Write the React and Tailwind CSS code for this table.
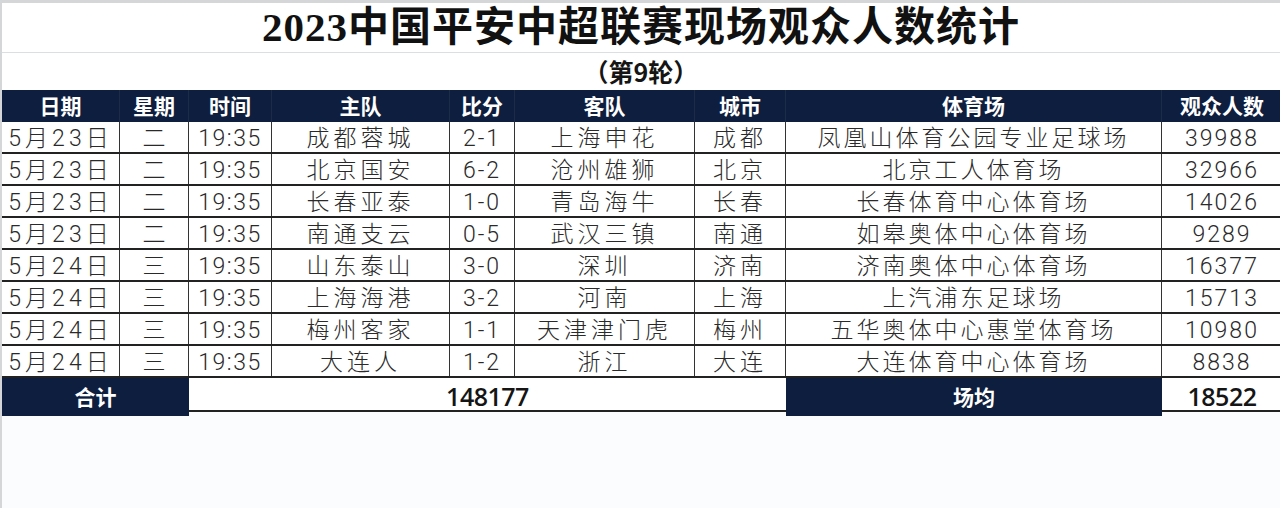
import React from 'react';

const cols = 'grid grid-cols-[118px_69px_83px_178px_65px_180px_91px_376px_120px]';

const headers = ['日期', '星期', '时间', '主队', '比分', '客队', '城市', '体育场', '观众人数'];

const rows = [
  ['5月23日', '二', '19:35', '成都蓉城', '2-1', '上海申花', '成都', '凤凰山体育公园专业足球场', '39988'],
  ['5月23日', '二', '19:35', '北京国安', '6-2', '沧州雄狮', '北京', '北京工人体育场', '32966'],
  ['5月23日', '二', '19:35', '长春亚泰', '1-0', '青岛海牛', '长春', '长春体育中心体育场', '14026'],
  ['5月23日', '二', '19:35', '南通支云', '0-5', '武汉三镇', '南通', '如皋奥体中心体育场', '9289'],
  ['5月24日', '三', '19:35', '山东泰山', '3-0', '深圳', '济南', '济南奥体中心体育场', '16377'],
  ['5月24日', '三', '19:35', '上海海港', '3-2', '河南', '上海', '上汽浦东足球场', '15713'],
  ['5月24日', '三', '19:35', '梅州客家', '1-1', '天津津门虎', '梅州', '五华奥体中心惠堂体育场', '10980'],
  ['5月24日', '三', '19:35', '大连人', '1-2', '浙江', '大连', '大连体育中心体育场', '8838'],
];

const body = "font-['Roboto','Noto_Sans_CJK_SC',sans-serif]";
const cjk = "font-['Noto_Sans_CJK_SC',sans-serif]";

// letter spacing per column, the sheet spreads the text out
const track = [
  'tracking-[4px]',
  '',
  'tracking-[1.5px]',
  'tracking-[4px]',
  'tracking-[2px]',
  'tracking-[4px]',
  'tracking-[4px]',
  'tracking-[3px]',
  'tracking-[2px]',
];

const App = () => {
  return (
    <div className="w-[1280px] h-[508px] bg-[#fbfcfd] overflow-hidden border-t-[3px] border-l-2 border-[#d4d6d8]">
      {/* title */}
      <div className="h-[50px] flex items-center justify-center border-b border-[#dcdfe2] bg-white">
        <h1 className="font-['Liberation_Serif','Noto_Sans_CJK_SC',serif] font-semibold text-[41px] text-[#111] tracking-[1px] leading-none whitespace-nowrap">
          2023中国平安中超联赛现场观众人数统计
        </h1>
      </div>
      <div className="h-[37px] flex items-center justify-center bg-white">
        <p className={`${cjk} font-bold text-[25px] text-[#151515] leading-none`}>（第9轮）</p>
      </div>

      {/* header */}
      <div className={`${cols} h-[32px] bg-[#0e1e3e] text-white ${cjk} font-bold text-[21px]`}>
        {headers.map((h, i) => (
          <div key={h} className={`flex items-center justify-center whitespace-nowrap ${i < 8 ? 'border-r border-[#1c2b48]' : ''}`}>
            {h}
          </div>
        ))}
      </div>

      {/* rows */}
      {rows.map((r, ri) => (
        <div key={ri} className={`${cols} h-[32px] overflow-hidden bg-white border-b-2 border-[#222] ${body} font-light text-[23px] text-[#2a2a2a]`}>
          {r.map((c, ci) => (
            <div
              key={ci}
              className={`flex items-center justify-center whitespace-nowrap ${track[ci]} ${ci < 8 ? 'border-r border-[#333]' : ''}`}
            >
              {c}
            </div>
          ))}
        </div>
      ))}

      {/* total */}
      <div className="grid grid-cols-[187px_597px_376px_120px] h-[34px] border-b-2 border-[#222] bg-white">
        <div className={`bg-[#0e1e3e] text-white flex items-center justify-center ${cjk} font-bold text-[21px]`}>合计</div>
        <div className="flex items-center justify-center font-['Open_Sans',sans-serif] font-semibold text-[25px] text-[#151515] tracking-[-0.5px]">148177</div>
        <div className={`bg-[#0e1e3e] text-white flex items-center justify-center ${cjk} font-bold text-[21px]`}>场均</div>
        <div className="flex items-center justify-center font-['Open_Sans',sans-serif] font-semibold text-[25px] text-[#151515] tracking-[-0.5px]">18522</div>
      </div>
    </div>
  );
};

export default App;
